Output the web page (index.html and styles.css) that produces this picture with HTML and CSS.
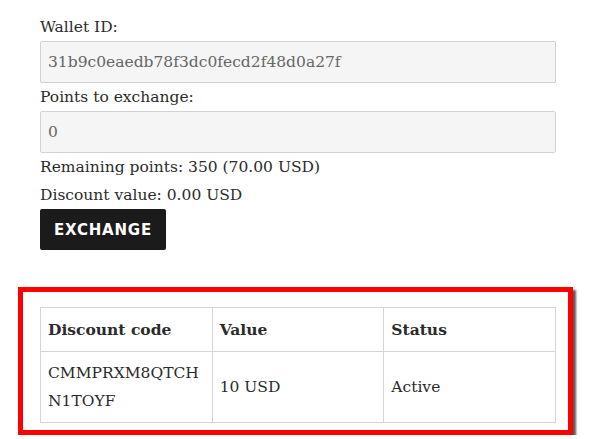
FILE: index.html
```html
<!DOCTYPE html>
<html lang="en">
<head>
  <meta charset="UTF-8" />
  <meta name="viewport" content="width=device-width, initial-scale=1.0" />
  <title>Exchange points</title>
  <link rel="stylesheet" href="styles.css">
</head>
<body>
  <div class="wallet">
    <label for="wallet">Wallet ID:</label>
    <input type="text" id="wallet" value="31b9c0eaedb78f3dc0fecd2f48d0a27f" readonly />

    <label for="points">Points to exchange:</label>
    <input type="number" id="points" value="0" />

    <p>Remaining points: 350 (70.00 USD)</p>
    <p>Discount value: 0.00 USD</p>
    <button class="exchange-btn">Exchange</button>
  </div>

  <div class="codes">
    <table>
      <thead>
        <tr>
          <th>Discount code</th>
          <th>Value</th>
          <th>Status</th>
        </tr>
      </thead>
      <tbody>
        <tr>
          <td class="code">CMMPRXM8QTCHN1TOYF</td>
          <td>10 USD</td>
          <td>Active</td>
        </tr>
      </tbody>
    </table>
  </div>
</body>
</html>
```

FILE: styles.css
```css
body {
  margin: 0;
  font-family: "DejaVu Serif", "Liberation Serif", serif;
  font-size: 15.5px;
  line-height: 28px;
  color: #2b2b2b;
  background: white;
}
.wallet {
  width: 516px;
  padding: 13px 0 0 40px;
}
label {
  display: block;
}
.wallet input {
  display: block;
  box-sizing: border-box;
  width: 100%;
  height: 42px;
  padding: 0 7px;
  border: 1px solid #d2d2d2;
  border-radius: 2px;
  background: #f5f5f5;
  font-family: inherit;
  font-size: 15.5px;
  color: #666;
}
.wallet input[type="number"] {
  -moz-appearance: textfield;
}
.wallet input::-webkit-inner-spin-button {
  -webkit-appearance: none;
}
.wallet p {
  margin: 0;
}
.exchange-btn {
  display: block;
  width: 126px;
  height: 41px;
  padding-top: 2px;
  border: none;
  border-radius: 2px;
  background: #1b1b1b;
  color: white;
  font-family: "DejaVu Sans", sans-serif;
  font-weight: bold;
  font-size: 15px;
  letter-spacing: 0.8px;
  text-transform: uppercase;
  cursor: pointer;
}
.codes {
  box-sizing: border-box;
  width: 555px;
  margin: 37px 0 0 18px;
  padding: 15px 12px 7px 17px;
  border: 5px solid #f00;
  box-shadow: 3px 3px 2px rgba(0,0,0,0.65);
}
table {
  width: 516px;
  border-collapse: collapse;
  table-layout: fixed;
}
th, td {
  border: 1px solid #d4d4d4;
  padding: 7px;
  text-align: left;
  vertical-align: middle;
}
th {
  padding-top: 8px;
  font-weight: bold;
}
td.code {
  word-break: break-all;
}
```
